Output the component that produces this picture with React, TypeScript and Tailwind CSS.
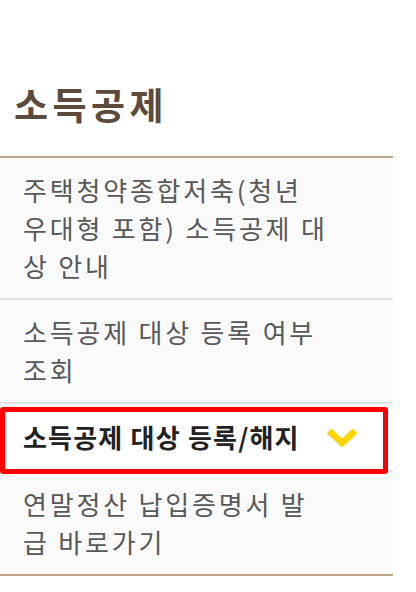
const font = { fontFamily: '"Malgun Gothic", "Noto Sans CJK KR", sans-serif' };

type Item = { lines: string[]; active?: boolean };

const items: Item[] = [
  { lines: ["주택청약종합저축(청년", "우대형 포함) 소득공제 대", "상 안내"] },
  { lines: ["소득공제 대상 등록 여부", "조회"] },
  { lines: ["소득공제 대상 등록/해지"], active: true },
  { lines: ["연말정산 납입증명서 발", "급 바로가기"] },
];

function Chevron() {
  return (
    <svg width="34" height="24" viewBox="0 0 34 24" className="shrink-0">
      <polyline points="4,6 17,18 30,6" fill="none" stroke="#ffd400" strokeWidth="6.5" strokeLinejoin="miter" />
    </svg>
  );
}

export default function App() {
  return (
    <div className="relative h-[592px] w-[416px] overflow-hidden bg-white" style={font}>
      <h2 className="pl-[14px] pt-[78px] pb-[26px] text-[37px] font-bold leading-[52px] tracking-[4.5px] text-[#5c4b3c]">소득공제</h2>
      <ul className="w-[393px] border-y-2 border-[#bca78d] bg-[#fafafa]">
        {items.map((item, i) => (
          <li
            key={i}
            className={
              "flex items-center justify-between border-[#e2e2e2] pl-[23px] pr-[34px] " +
              (i < items.length - 1 ? "border-b-2 " : "") +
              (item.active ? "bg-white py-[14px] text-[#222]" : "py-[13px] text-[#585858]")
            }
          >
            <p className={"text-[26px] leading-[38px] " + (item.active ? "font-bold tracking-[1.2px]" : "tracking-[2.8px]")}>
              {item.lines.map((l, j) => (
                <span key={j} className="block whitespace-nowrap">{l}</span>
              ))}
            </p>
            {item.active && <Chevron />}
          </li>
        ))}
      </ul>
      <div className="absolute left-0 top-[407px] h-[67px] w-[388px] rounded-[3px] border-[5px] border-[#ff0000]" />
    </div>
  );
}
